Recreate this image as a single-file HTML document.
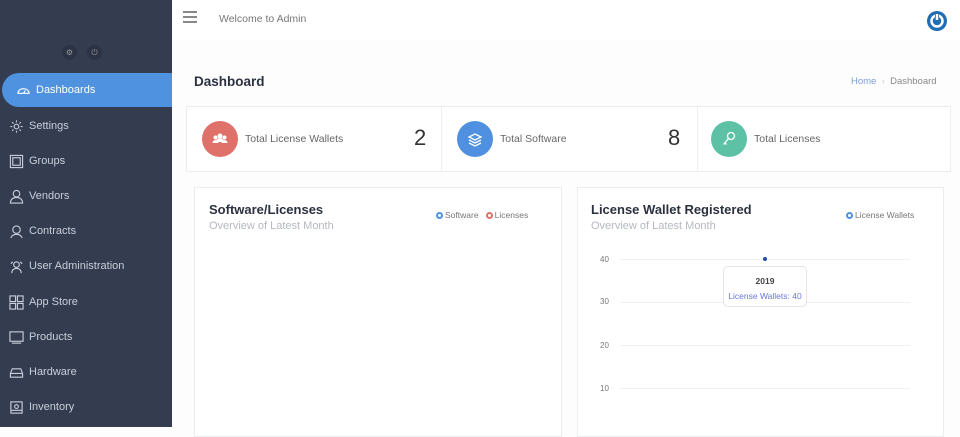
<!DOCTYPE html>
<html><head><style>
*{margin:0;padding:0;box-sizing:border-box}
body{width:960px;height:427px;overflow:hidden;background:#fdfdfe;font-family:"Liberation Sans",sans-serif;position:relative}
.sb{position:absolute;left:0;top:0;width:172px;height:427px;background:#343c50}
.tb{position:absolute;left:172px;top:0;right:0;height:40px;background:#fff}
.it{position:absolute;left:0;height:34px;width:172px;color:#c9ceda;font-size:11px;display:flex;align-items:center;padding-left:9px}
.it svg{width:15px;height:15px;margin-right:5px;stroke:#c9ceda;fill:none;stroke-width:1.2}
.act{background:#4e92e0;color:#fff;border-radius:18px 0 0 18px;left:2px;width:170px;padding-left:14px}
.act svg{stroke:#fff}
.abs{position:absolute}
.circ{position:absolute;width:36px;height:36px;border-radius:50%;top:121px}
.lbl{position:absolute;top:133px;font-size:10.5px;color:#666}
.num{position:absolute;top:125px;font-size:22px;color:#333}
.card{position:absolute;top:187px;height:250px;background:#fff;border:1px solid #ebedf0}
.ct{position:absolute;font-size:13px;color:#2c3140;font-weight:bold}
.cs{position:absolute;font-size:11px;color:#b5b8c0}
.lg{position:absolute;font-size:8.5px;color:#777;display:flex;align-items:center}
.dot{display:inline-block;width:7px;height:7px;border-radius:50%;border:2px solid;margin-right:2px;background:#fff}
.ax{position:absolute;left:600px;font-size:8px;color:#777}
.gl{position:absolute;left:620px;width:290px;height:1px;background:#f0f0f2}
</style></head><body>
<div class="sb">
 <div class="abs" style="left:62px;top:45px;width:15px;height:15px;border-radius:50%;background:#2c3344;color:#999;font-size:8px;text-align:center;line-height:15px">⚙</div>
 <div class="abs" style="left:87px;top:45px;width:15px;height:15px;border-radius:50%;background:#2c3344;color:#999;font-size:8px;text-align:center;line-height:15px">⏻</div>
 <div class="it act" style="top:73px"><svg viewBox="0 0 16 16"><path d="M2 11a6 5 0 0 1 12 0z"/><path d="M8 11l2-3"/></svg>Dashboards</div>
 <div class="it" style="top:109px"><svg viewBox="0 0 16 16"><circle cx="8" cy="8" r="2.5"/><path d="M8 1.5v2M8 12.5v2M1.5 8h2M12.5 8h2M3.4 3.4l1.4 1.4M11.2 11.2l1.4 1.4M3.4 12.6l1.4-1.4M11.2 4.8l1.4-1.4"/></svg>Settings</div>
 <div class="it" style="top:144px"><svg viewBox="0 0 16 16"><rect x="1.5" y="1.5" width="13" height="13"/><rect x="4" y="4" width="8" height="8"/></svg>Groups</div>
 <div class="it" style="top:179px"><svg viewBox="0 0 16 16"><circle cx="8" cy="5" r="3.5"/><path d="M1.5 15c0-4 3-6 6.5-6s6.5 2 6.5 6z"/></svg>Vendors</div>
 <div class="it" style="top:214px"><svg viewBox="0 0 16 16"><circle cx="8" cy="6" r="4"/><path d="M2 15c1-3 3-4 6-4s5 1 6 4"/></svg>Contracts</div>
 <div class="it" style="top:249px"><svg viewBox="0 0 16 16"><circle cx="8" cy="6" r="3"/><path d="M3 15c0-3 2-5 5-5s5 2 5 5M2 5l2-2M14 5l-2-2"/></svg>User Administration</div>
 <div class="it" style="top:285px"><svg viewBox="0 0 16 16"><rect x="1" y="1" width="6" height="6"/><rect x="9" y="1" width="6" height="6"/><rect x="1" y="9" width="6" height="6"/><rect x="9" y="9" width="6" height="6"/></svg>App Store</div>
 <div class="it" style="top:320px"><svg viewBox="0 0 16 16"><rect x="1" y="2" width="14" height="10"/><path d="M3 14h10"/></svg>Products</div>
 <div class="it" style="top:355px"><svg viewBox="0 0 16 16"><path d="M1.5 9l2-5h9l2 5v4h-13z M1.5 9h13"/></svg>Hardware</div>
 <div class="it" style="top:390px"><svg viewBox="0 0 16 16"><rect x="2" y="2" width="12" height="12"/><circle cx="8" cy="7" r="2"/><path d="M2 11h12"/></svg>Inventory</div>
</div>
<div class="tb">
 <div class="abs" style="left:11px;top:11px;width:14px;height:1.5px;background:#888;box-shadow:0 5px 0 #888,0 10px 0 #888"></div>
 <div class="abs" style="left:47px;top:13px;font-size:10.5px;color:#777">Welcome to Admin</div>
 <svg class="abs" style="left:753px;top:9px" width="24" height="24" viewBox="0 0 24 24"><circle cx="12" cy="12" r="10" fill="#1f6db5"/><circle cx="12" cy="12" r="5.5" fill="none" stroke="#fff" stroke-width="2.5"/><path d="M12 4.5v7" stroke="#1f6db5" stroke-width="4"/><path d="M12 5v6" stroke="#fff" stroke-width="2.5"/></svg>
</div>
<div class="abs" style="left:194px;top:74px;font-size:13.5px;color:#2c3140;font-weight:bold">Dashboard</div>
<div class="abs" style="left:851px;top:76px;font-size:9.5px;color:#7b9fd6">Home <span style="color:#ccc">&nbsp;›&nbsp;</span> <span style="color:#888">Dashboard</span></div>
<div class="abs" style="left:186px;top:106px;width:765px;height:66px;background:#fff;border:1px solid #ebedf0"></div>
<div class="abs" style="left:441px;top:106px;width:1px;height:66px;background:#ebedf0"></div>
<div class="abs" style="left:697px;top:106px;width:1px;height:66px;background:#ebedf0"></div>
<div class="circ" style="left:202px;background:#e0716a"><svg width="36" height="36" viewBox="0 0 36 36" fill="#fff"><circle cx="18" cy="15" r="2.5"/><circle cx="13.5" cy="16.5" r="2"/><circle cx="22.5" cy="16.5" r="2"/><path d="M10.5 22a3 3 0 0 1 6 0zM19.5 22a3 3 0 0 1 6 0zM14 21a4 4 0 0 1 8 0z"/></svg></div>
<div class="lbl" style="left:245px">Total License Wallets</div>
<div class="num" style="left:414px">2</div>
<div class="circ" style="left:457px;background:#4f90e0"><svg width="36" height="36" viewBox="0 0 36 36" fill="none" stroke="#fff" stroke-width="1.3"><path d="M12 16l6-3 6 3-6 3z M12 19l6 3 6-3 M12 22l6 3 6-3"/></svg></div>
<div class="lbl" style="left:500px">Total Software</div>
<div class="num" style="left:668px">8</div>
<div class="circ" style="left:711px;background:#5dc1a5"><svg width="36" height="36" viewBox="0 0 36 36" fill="none" stroke="#fff" stroke-width="1.3"><circle cx="20" cy="15" r="3.5"/><path d="M17.5 17.5l-5 6M14 22l1.5 1.5"/></svg></div>
<div class="lbl" style="left:754px">Total Licenses</div>
<div class="card" style="left:194px;width:368px"></div>
<div class="card" style="left:577px;width:367px"></div>
<div class="ct" style="left:209px;top:202px">Software/Licenses</div>
<div class="cs" style="left:209px;top:220px">Overview of Latest Month</div>
<div class="lg" style="left:436px;top:210px"><span class="dot" style="border-color:#4f90e0"></span>Software&nbsp;&nbsp;&nbsp;<span class="dot" style="border-color:#e0716a"></span>Licenses</div>
<div class="ct" style="left:591px;top:202px">License Wallet Registered</div>
<div class="cs" style="left:591px;top:220px">Overview of Latest Month</div>
<div class="lg" style="left:846px;top:210px"><span class="dot" style="border-color:#4f90e0"></span>License Wallets</div>
<div class="ax" style="top:255px">40</div><div class="gl" style="top:259px"></div>
<div class="ax" style="top:297px">30</div><div class="gl" style="top:302px"></div>
<div class="ax" style="top:341px">20</div><div class="gl" style="top:345px"></div>
<div class="ax" style="top:384px">10</div><div class="gl" style="top:388px"></div>
<div class="abs" style="left:763px;top:257px;width:4px;height:4px;border-radius:50%;background:#1f4fa0"></div>
<div class="abs" style="left:723px;top:266px;width:84px;height:41px;background:#fff;border:1px solid #e4e4e8;border-radius:5px;text-align:center;font-size:8.5px">
 <div style="color:#444;font-weight:bold;margin-top:9px">2019</div>
 <div style="color:#6b74e0;margin-top:5px">License Wallets: 40</div>
</div>
</body></html>
